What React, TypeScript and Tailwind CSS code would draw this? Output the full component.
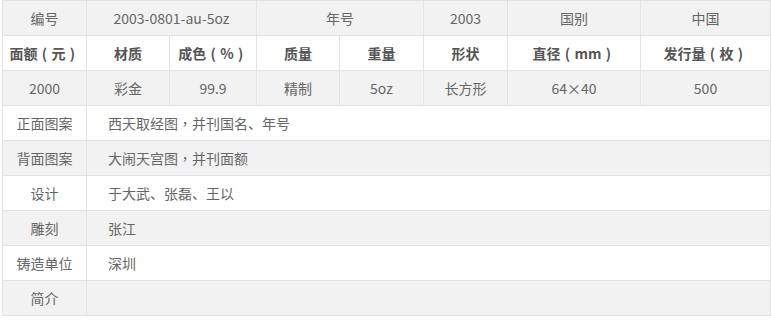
const cols = [84, 83, 87, 83, 84, 84, 133, 130];

const info = [
  ['正面图案', '西天取经图，并刊国名、年号'],
  ['背面图案', '大闹天宫图，并刊面额'],
  ['设计', '于大武、张磊、王以'],
  ['雕刻', '张江'],
  ['铸造单位', '深圳'],
  ['简介', ''],
];

const td = 'border border-[#e3e3e3] h-[35px] text-center align-middle p-0';

// centred full-width punctuation, as in the source font
function P({ c }: { c: string }) {
  if (c === '（' || c === '）') {
    return <span className="inline-block w-[1em] text-center">{c === '（' ? '(' : ')'}</span>;
  }
  return <span style={{ fontFamily: '"Noto Sans CJK TC", sans-serif' }}>{c}</span>;
}

function withPunct(s: string) {
  return s.split(/(，|（|）)/).map((part, i) =>
    part === '，' || part === '（' || part === '）' ? <P key={i} c={part} /> : part
  );
}

export default function App() {
  return (
    <div className="bg-white w-[771px] h-[325px] pl-[2px]" style={{ fontFamily: '"Noto Sans CJK SC", sans-serif' }}>
      <table className="table-fixed border-collapse w-[769px] text-[14px] text-[#666]">
        <colgroup>
          {cols.map((w, i) => (
            <col key={i} style={{ width: w }} />
          ))}
        </colgroup>
        <tbody>
          <tr className="bg-[#f2f2f2]">
            <td className={td}>编号</td>
            <td className={td} colSpan={2}>2003-0801-au-5oz</td>
            <td className={td} colSpan={2}>年号</td>
            <td className={td}>2003</td>
            <td className={td}>国别</td>
            <td className={td}>中国</td>
          </tr>
          <tr className="bg-white font-bold text-[#555]">
            <td className={td}>{withPunct('面额（元）')}</td>
            <td className={td}>材质</td>
            <td className={td}>{withPunct('成色（%）')}</td>
            <td className={td}>质量</td>
            <td className={td}>重量</td>
            <td className={td}>形状</td>
            <td className={td}>{withPunct('直径（mm）')}</td>
            <td className={td}>{withPunct('发行量（枚）')}</td>
          </tr>
          <tr className="bg-[#f2f2f2]">
            <td className={td}>2000</td>
            <td className={td}>彩金</td>
            <td className={td}>99.9</td>
            <td className={td}>精制</td>
            <td className={td}>5oz</td>
            <td className={td}>长方形</td>
            <td className={td}>64×40</td>
            <td className={td}>500</td>
          </tr>
          {info.map(([k, v], i) => (
            <tr key={k} className={i % 2 === 0 ? 'bg-white' : 'bg-[#f2f2f2]'}>
              <td className={td}>{k}</td>
              <td className={`${td} !text-left !pl-[21px]`} colSpan={7}>{withPunct(v)}</td>
            </tr>
          ))}
        </tbody>
      </table>
    </div>
  );
}
